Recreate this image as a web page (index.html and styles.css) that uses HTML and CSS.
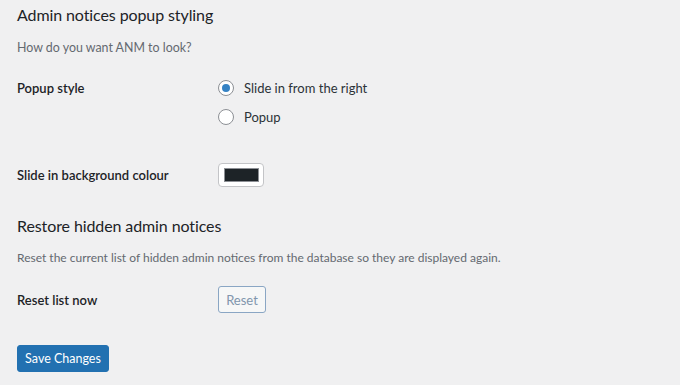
FILE: index.html
```
<!DOCTYPE html>
<html lang="en">
<head>
    <meta charset="UTF-8">
    <title>ANM settings</title>
    <link rel="stylesheet" href="styles.css">
</head>
<body>
    <div class="wrap">
        <h2>Admin notices popup styling</h2>
        <p class="desc">How do you want ANM to look?</p>

        <div class="row row-radios">
            <div class="label">Popup style</div>
            <div class="field">
                <label class="radio"><span class="dot checked"></span>Slide in from the right</label>
                <label class="radio"><span class="dot"></span>Popup</label>
            </div>
        </div>

        <div class="row row-colour">
            <div class="label">Slide in background colour</div>
            <div class="field">
                <span class="swatch"><span class="swatch-inner"></span></span>
            </div>
        </div>

        <h2 class="second">Restore hidden admin notices</h2>
        <p class="desc desc-long">Reset the current list of hidden admin notices from the database so they are displayed again.</p>

        <div class="row row-reset">
            <div class="label">Reset list now</div>
            <div class="field">
                <button class="btn-reset">Reset</button>
            </div>
        </div>

        <button class="btn-save">Save Changes</button>
    </div>
</body>
</html>
```

FILE: styles.css
```
body {
    margin: 0;
    background-color: #f0f0f1;
    font-family: "Segoe UI", Lato, sans-serif;
    font-size: 13px;
    color: #1d2327;
}

.wrap {
    padding: 0 17px;
}

h2 {
    font-size: 16px;
    font-weight: 400;
    margin: 0;
    padding-top: 5px;
    line-height: 20px;
    letter-spacing: -0.1px;
}

.desc {
    color: #646970;
    font-size: 12.4px;
    margin: 15px 0 0;
    line-height: 16px;
}

.desc-long {
    font-size: 12px;
    margin-top: 14px;
}

.row {
    display: flex;
    align-items: flex-start;
}

.label {
    width: 201px;
    font-weight: 600;
}

.row-radios {
    margin-top: 23px;
}

.row-radios .label {
    line-height: 18px;
}

.field {
    display: flex;
    flex-direction: column;
}

.radio {
    display: flex;
    align-items: center;
    gap: 10px;
    line-height: 18px;
    color: #2c3338;
    height: 18px;
    margin-bottom: 11px;
}

.dot {
    width: 14px;
    height: 14px;
    border: 1px solid #8c8f94;
    border-radius: 50%;
    background: #fff;
    position: relative;
}

.dot.checked::after {
    content: "";
    position: absolute;
    left: 3px;
    top: 3px;
    width: 8px;
    height: 8px;
    border-radius: 50%;
    background: #3582c4;
}

.row-colour {
    margin-top: 26px;
    align-items: center;
}

.swatch {
    display: block;
    width: 46px;
    height: 24px;
    border: 1px solid #c3c4c7;
    border-radius: 4px;
    background: #fff;
    padding: 4px 4px 4px 5px;
    box-sizing: border-box;
}

.swatch-inner {
    display: block;
    height: 100%;
    background: #1d2327;
    border: 1px solid #8c8f94;
    box-sizing: border-box;
}

.second {
    margin-top: 24px;
}

.row-reset {
    margin-top: 20px;
    align-items: center;
}

.btn-reset {
    font-family: inherit;
    font-size: 13px;
    width: 48px;
    height: 27px;
    background: #f6f7f7;
    border: 1px solid #8aa6c4;
    border-radius: 3px;
    color: #8196ad;
    padding: 0;
}

.btn-save {
    margin-top: 32px;
    font-family: inherit;
    font-size: 12.5px;
    width: 92px;
    height: 27px;
    background: #2271b1;
    border: 1px solid #2271b1;
    border-radius: 3px;
    color: #fff;
    padding: 0;
}
```
